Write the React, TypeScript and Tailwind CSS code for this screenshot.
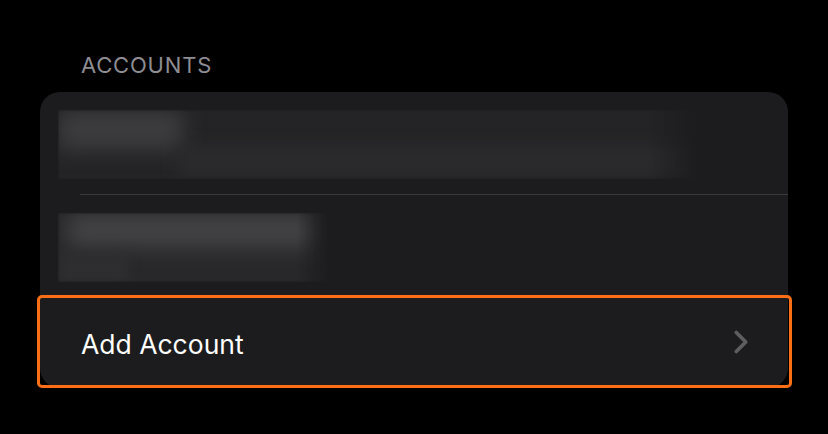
import { ChevronRight } from "lucide-react";

function BlurRow({ wide }: { wide: boolean }) {
  // redacted account row: a soft, smeared block instead of text
  return (
    <div className="h-[102px] pl-[18px] pr-[88px] pt-[18px] pb-[15px]">
      {wide ? (
        <div className="relative h-full w-[642px] overflow-hidden bg-[#242426] blur-[1.5px] [mask-image:linear-gradient(to_right,black,black_92%,transparent)]">
          <div className="absolute left-0 top-0 h-[40px] w-[125px] bg-[#3c3c3e] blur-[10px]" />
          <div className="absolute left-[120px] top-[36px] h-[30px] w-[520px] bg-[#2b2b2d] blur-[8px]" />
        </div>
      ) : (
        <div className="relative h-full w-[272px] overflow-hidden bg-[#28282a] blur-[1.5px] [mask-image:linear-gradient(to_right,black,black_88%,transparent)]">
          <div className="absolute left-[10px] top-0 h-[35px] w-[250px] bg-[#424244] blur-[10px]" />
          <div className="absolute left-0 top-[40px] h-[30px] w-[70px] bg-[#2e2e30] blur-[6px]" />
        </div>
      )}
    </div>
  );
}

export default function App() {
  return (
    <div
      className="min-h-screen bg-black pt-[52px] pl-[40px]"
      style={{ fontFamily: "Inter, 'Noto Sans', sans-serif" }}
    >
      <div className="pl-[41px] pb-[14px] text-[22px] leading-[26px] tracking-[0.8px] text-[#8d8d92]">
        ACCOUNTS
      </div>
      <div className="w-[748px] rounded-[20px] bg-[#1c1c1e]">
        <BlurRow wide />
        <div className="ml-[40px] h-px bg-[#3a3a3c]" />
        <div className="h-[100px]">
          <BlurRow wide={false} />
        </div>
        <div className="-ml-[3px] -mr-[4px] rounded-[5px] border-[3px] border-[#fa6f16]">
          <div className="flex h-[87px] items-center justify-between pl-[41px] pr-[29px]">
            <span className="mt-[7px] text-[26.5px] text-white">Add Account</span>
            <ChevronRight className="h-[38px] w-[38px] text-[#5e5e62]" strokeWidth={2.3} />
          </div>
        </div>
      </div>
    </div>
  );
}
